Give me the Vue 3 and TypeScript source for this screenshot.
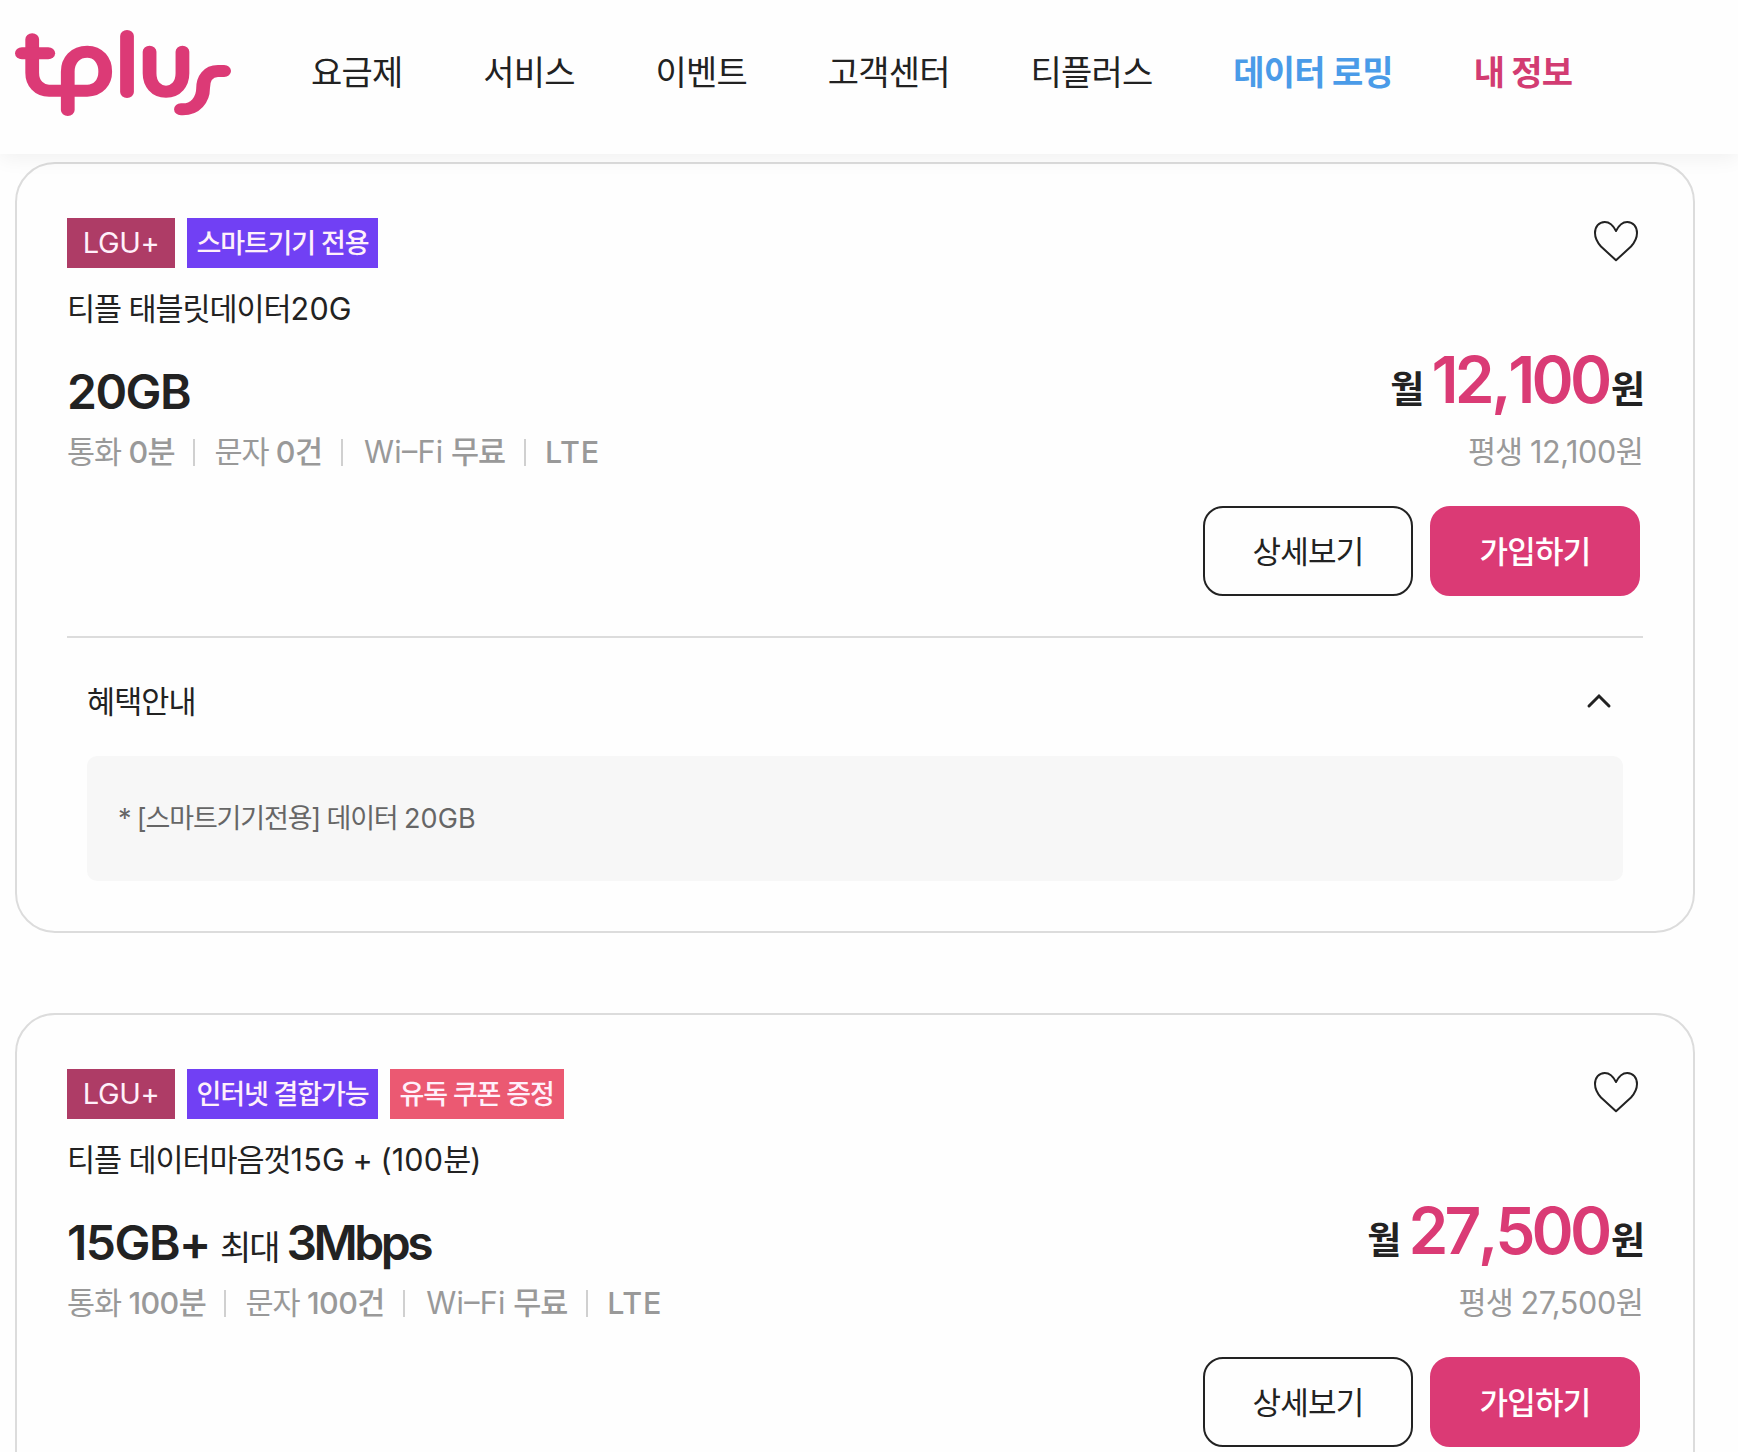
<script setup lang="ts">
interface NavItem {
  label: string
  tone?: 'blue' | 'pink'
}

interface Tag {
  label: string
  kind: 'carrier' | 'feature' | 'coupon'
}

interface DataPart {
  text: string
  kind: 'volume' | 'note' | 'speed'
}

interface Plan {
  tags: Tag[]
  name: string
  data: DataPart[]
  call: string
  sms: string
  price: string
  benefit?: string
}

interface Run {
  text: string
  latin: boolean
}

const navItems: NavItem[] = [
  { label: '요금제' },
  { label: '서비스' },
  { label: '이벤트' },
  { label: '고객센터' },
  { label: '티플러스' },
  { label: '데이터 로밍', tone: 'blue' },
  { label: '내 정보', tone: 'pink' },
]

const plans: Plan[] = [
  {
    tags: [
      { label: 'LGU+', kind: 'carrier' },
      { label: '스마트기기 전용', kind: 'feature' },
    ],
    name: '티플 태블릿데이터20G',
    data: [{ text: '20GB', kind: 'volume' }],
    call: '0분',
    sms: '0건',
    price: '12,100',
    benefit: '* [스마트기기전용] 데이터 20GB',
  },
  {
    tags: [
      { label: 'LGU+', kind: 'carrier' },
      { label: '인터넷 결합가능', kind: 'feature' },
      { label: '유독 쿠폰 증정', kind: 'coupon' },
    ],
    name: '티플 데이터마음껏15G + (100분)',
    data: [
      { text: '15GB+', kind: 'volume' },
      { text: '최대', kind: 'note' },
      { text: '3Mbps', kind: 'speed' },
    ],
    call: '100분',
    sms: '100건',
    price: '27,500',
  },
]

// Latin and Hangul runs are tracked differently, so mixed text is split into runs.
function runs(text: string): Run[] {
  return text
    .split(/([0-9A-Za-z+,()–]+)/)
    .filter((part) => part !== '')
    .map((part) => ({ text: part, latin: /[0-9A-Za-z+,()–]/.test(part) }))
}
</script>

<template>
  <div class="page">
    <header class="header">
      <svg class="logo" viewBox="39 90 565 258" preserveAspectRatio="none" aria-label="tplus">
        <g fill="none" stroke="#dc3a76" stroke-width="36" stroke-linecap="round" stroke-linejoin="round">
          <path d="M177 330V215C177 180 197 155 228 155C256 155 275 180 275 215C275 248 256 272 228 272H128C102 272 84 250 84 218V118" />
          <path d="M57 160H126" />
          <path d="M332 108V276" />
          <path d="M391 155V220C391 252 408 275 434 275C460 275 477 252 477 220V155" />
          <path d="M473 328H478C510 328 531 300 531 265C531 235 545 213 570 213H586" />
        </g>
      </svg>
      <nav class="nav">
        <a v-for="item in navItems" :key="item.label" class="nav-item" :class="item.tone">{{ item.label }}</a>
      </nav>
    </header>

    <main class="list">
      <article v-for="plan in plans" :key="plan.name" class="card">
        <div class="top">
          <div class="tags">
            <span v-for="tag in plan.tags" :key="tag.label" class="tag" :class="tag.kind">{{ tag.label }}</span>
          </div>
          <svg class="heart" viewBox="0 0 48 44" aria-hidden="true">
            <path
              d="M24 12C21 6 17.500 3 12.800 3C6.800 3 3 7.800 3 14C3 19 5 23 9 27.500L24 41.300L39 27.500C43 23 45 19 45 14C45 7.800 41.200 3 35.200 3C30.500 3 27 6 24 12Z"
              fill="none" stroke="#222" stroke-width="2" stroke-linejoin="round" />
          </svg>
        </div>
        <h2 class="name"><span v-for="(run, i) in runs(plan.name)" :key="i" :class="{ latin: run.latin }">{{ run.text }}</span></h2>

        <div class="summary">
          <div class="left">
            <div class="data">
              <span v-for="part in plan.data" :key="part.text" :class="part.kind">{{ part.text }}</span>
            </div>
            <div class="specs">
              <span>통화 <b><span v-for="(run, i) in runs(plan.call)" :key="i" :class="{ latin: run.latin }">{{ run.text }}</span></b></span>
              <i class="bar"></i>
              <span>문자 <b><span v-for="(run, i) in runs(plan.sms)" :key="i" :class="{ latin: run.latin }">{{ run.text }}</span></b></span>
              <i class="bar"></i>
              <span class="wifi"><span class="wide">Wi–Fi</span> <b>무료</b></span>
              <i class="bar"></i>
              <span class="lte">LTE</span>
            </div>
          </div>
          <div class="right">
            <div class="price">
              <span class="unit month">월</span><span class="amount">{{ plan.price.split(',')[0] }}<span class="comma">,</span>{{ plan.price.split(',')[1] }}</span><span class="unit">원</span>
            </div>
            <div class="lifetime">평생 <span class="latin">{{ plan.price }}</span>원</div>
            <div class="actions">
              <button class="btn outline">상세보기</button>
              <button class="btn solid">가입하기</button>
            </div>
          </div>
        </div>

        <section v-if="plan.benefit" class="benefit">
          <div class="benefit-head">
            <span class="benefit-title">혜택안내</span>
            <svg class="chevron" viewBox="0 0 28 18" aria-hidden="true">
              <path d="M4 14L14 4L24 14" fill="none" stroke="#222" stroke-width="3" stroke-linecap="round" />
            </svg>
          </div>
          <div class="benefit-box"><span v-for="(run, i) in runs(plan.benefit)" :key="i" :class="{ latin: run.latin }">{{ run.text }}</span></div>
        </section>
      </article>
    </main>
  </div>
</template>

<style>
body {
  margin: 0;
  background: #fefefe;
  overflow: hidden;
}
</style>

<style scoped>
.page {
  width: 1738px;
  height: 1452px;
  overflow: hidden;
  font-family: Inter, "Noto Sans CJK KR", sans-serif;
  color: #222;
}

.header {
  position: relative;
  z-index: 1;
  box-sizing: border-box;
  display: flex;
  align-items: flex-start;
  height: 154px;
  padding: 30px 0 0 15px;
  background: #fefefe;
  box-shadow: 0 4px 20px rgba(0, 0, 0, 0.06);
}

.logo {
  flex: none;
  width: 216px;
  height: 86px;
}

.nav {
  display: flex;
  gap: 80.800px;
  margin: 23px 0 0 80px;
}

.nav-item {
  font-size: 34px;
  line-height: 40px;
  letter-spacing: -0.800px;
  white-space: nowrap;
}

.nav-item.blue {
  color: #4a9be8;
  font-weight: 700;
}

.nav-item.pink {
  color: #d23c72;
  font-weight: 700;
}

.list {
  display: flex;
  flex-direction: column;
  gap: 80px;
  padding: 8px 0 0 15px;
}

.card {
  box-sizing: border-box;
  flex: none;
  width: 1680px;
  height: 771px;
  padding: 54px 50px 50px;
  border: 2px solid #dcdcdc;
  border-radius: 40px;
}

.top {
  display: flex;
  justify-content: space-between;
  height: 50px;
}

.tags {
  display: flex;
  gap: 12px;
}

.tag {
  box-sizing: border-box;
  height: 50px;
  padding: 0 9.500px;
  color: #fff0fa;
  font-size: 27px;
  font-weight: 500;
  line-height: 51px;
  letter-spacing: -1.150px;
  white-space: nowrap;
}

.carrier {
  width: 108px;
  padding: 0;
  background: #ae3c66;
  font-size: 29px;
  font-weight: 400;
  line-height: 49px;
  letter-spacing: -0.400px;
  text-align: center;
}

.feature {
  width: 191px;
  background: #7140f4;
}

.coupon {
  width: 174px;
  background: #eb5972;
}

.heart {
  flex: none;
  width: 48px;
  height: 44px;
  margin: 1px 3px 0 0;
}

.name {
  margin: 20px 0 0;
  font-size: 30.500px;
  font-weight: 400;
  line-height: 42px;
  letter-spacing: -1.050px;
  white-space: pre;
}

.name .latin {
  letter-spacing: 0.200px;
}

.summary {
  display: flex;
  justify-content: space-between;
}

.left {
  padding-top: 32px;
}

.data {
  display: flex;
  align-items: baseline;
  gap: 8px;
  height: 60px;
  line-height: 60px;
}

.volume {
  font-size: 48px;
  font-weight: 600;
  letter-spacing: -1.500px;
}

.speed {
  font-size: 48px;
  font-weight: 600;
  letter-spacing: -3.500px;
}

.note {
  margin-left: 2px;
  font-size: 34px;
  letter-spacing: -2px;
}

.specs {
  display: flex;
  align-items: center;
  height: 40px;
  margin-top: 10px;
  color: #999;
  font-size: 30.500px;
  line-height: 40px;
  letter-spacing: -1.100px;
  white-space: nowrap;
}

.specs b {
  font-weight: 500;
}

.specs .latin {
  letter-spacing: -0.600px;
}

.bar {
  width: 2px;
  height: 27px;
  margin: 0 19.300px 0 18.700px;
  background: #d0d0d0;
}

.wifi {
  margin-left: 2px;
}

.wide {
  letter-spacing: 0.300px;
  font-feature-settings: "case";
}

.lte {
  font-weight: 500;
  letter-spacing: 0.800px;
}

.right {
  display: flex;
  flex-direction: column;
  align-items: flex-end;
  padding-top: 10px;
}

.price {
  height: 80px;
  margin-right: -2px;
  font-size: 64px;
  line-height: 80px;
  white-space: nowrap;
}

.amount {
  margin-right: 2.500px;
  color: #da3b75;
  font-weight: 600;
  letter-spacing: -3.800px;
}

.comma {
  margin: 0 0.500px;
}

.unit {
  font-size: 37px;
  font-weight: 700;
  line-height: 1;
}

.month {
  margin-right: 7px;
}

.lifetime {
  height: 40px;
  margin-top: 12px;
  color: #999;
  font-size: 30.500px;
  line-height: 40px;
  letter-spacing: -0.900px;
}

.lifetime .latin {
  letter-spacing: -0.350px;
}

.actions {
  display: flex;
  gap: 17px;
  margin: 34px 3px 0 0;
}

.btn {
  box-sizing: border-box;
  width: 210px;
  height: 90px;
  padding: 1px 0 0;
  border: 2px solid #222;
  border-radius: 20px;
  background: transparent;
  color: #222;
  font-family: inherit;
  font-size: 31px;
  line-height: 86px;
  letter-spacing: -0.800px;
}

.btn.solid {
  border-color: #db3a75;
  background: #db3a75;
  color: #fff;
  font-weight: 500;
}

.benefit {
  margin-top: 40px;
  padding: 0 20px;
  border-top: 2px solid #dcdcdc;
}

.benefit-head {
  display: flex;
  align-items: center;
  justify-content: space-between;
  height: 40px;
  padding: 43px 10px 35px 0;
  font-size: 30.500px;
  letter-spacing: -0.900px;
}

.benefit-title {
  padding-top: 2px;
  line-height: 38px;
}

.chevron {
  width: 28px;
  height: 18px;
}

.benefit-box {
  height: 125px;
  padding-left: 31px;
  border-radius: 10px;
  background: #f7f7f7;
  color: #666;
  font-size: 27px;
  line-height: 125px;
  letter-spacing: -1.150px;
  white-space: pre;
}

.benefit-box .latin {
  letter-spacing: 0.100px;
}
</style>
